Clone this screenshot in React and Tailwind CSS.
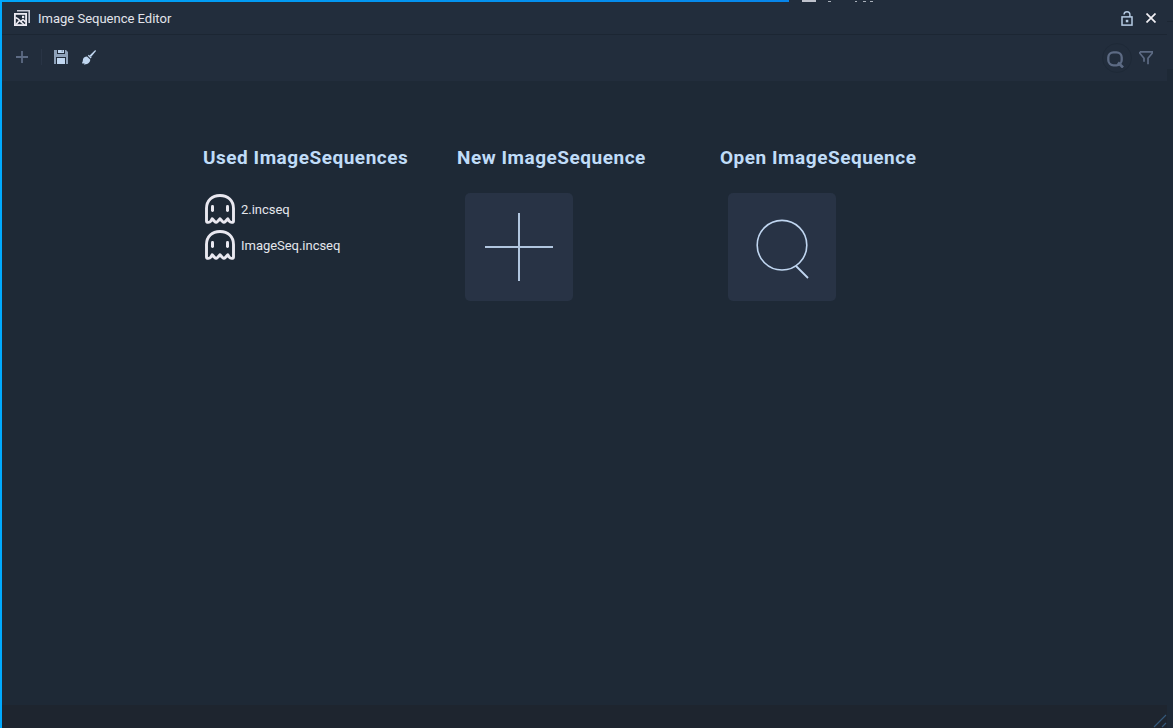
import React from 'react';

function ImagesIcon() {
  return (
    <svg width="16" height="16" viewBox="0 0 16 16" fill="none" className="block shrink-0">
      <path d="M3 .8H15.2V13" stroke="#c9ccd8" strokeWidth="1.6" />
      <rect x=".9" y="3.9" width="11.2" height="11.2" stroke="#eceaf2" strokeWidth="1.8" />
      <path d="M1.5 7.5 4 8.8 6.8 11.6 9 9.5 11.5 12M6.5 11.5 10.5 15M2 14.5 5 11" stroke="#eceaf2" strokeWidth="1.6" />
      <rect x="8" y="5.8" width="2.2" height="2.2" fill="#eceaf2" />
    </svg>
  );
}

function LockIcon() {
  return (
    <svg width="12" height="15" viewBox="0 0 12 15" fill="none" className="block">
      <rect x="1" y="5.9" width="10" height="8.2" stroke="#b6cbe3" strokeWidth="1.5" />
      <path d="M3 3.5C3.2 1.7 4.2.8 6 .8S8.9 1.8 8.9 3.6V6" stroke="#b6cbe3" strokeWidth="1.4" />
      <rect x="4.8" y="8.8" width="2.5" height="2.5" fill="#b6cbe3" />
    </svg>
  );
}

function SaveIcon() {
  return (
    <svg width="14" height="14" viewBox="0 0 14 14" className="block">
      <path d="M0 0H3V4H11V0H12L14 2V14H12V7H2V14H0Z" fill="#8ea1b9" />
      <path d="M2 4H12V7H2Z" fill="#8ea1b9" />
      <path d="M4 0H10V3H4Z" fill="#c0d6f0" />
      <path d="M7.5 0H9V2H7.5Z" fill="#8ea1b9" />
      <path d="M3 8H11V14H3Z" fill="#c0d6f0" />
    </svg>
  );
}

function BrushIcon() {
  return (
    <svg width="14" height="15" viewBox="0 0 14 15" className="block">
      <path d="M13.6.3 14 1 9 7 7.6 5.5 13 .2Z" fill="#c0d6f0" />
      <path d="M6.8 4.8 9.6 7.6 8.7 8.6 5.8 5.8Z" fill="#c0d6f0" />
      <path d="M5 6.4 8.2 9.5C8.4 12 6.4 14.6 1.8 14.4L2.6 13 .9 13.8 0 13C1.5 11 .2 9 2 7.4 3 6.6 4 6.4 5 6.4Z" fill="#c0d6f0" />
    </svg>
  );
}

function GhostIcon() {
  return (
    <svg width="30" height="30" viewBox="0 0 30 30" fill="none" className="block shrink-0">
      <path
        d="M1.5 27V14.5C1.5 6.5 7 1.5 15 1.5S28.5 6.5 28.5 14.5V27C28.3 28.8 25.5 28.8 24.2 27.2L22.8 24.7 20.3 27.5Q18.8 29.2 17.2 27.2L15 24.7 12.8 27.2Q11.2 29.2 9.7 27.5L7.2 24.7 5.8 27.2C4.5 28.8 1.7 28.8 1.5 27Z"
        stroke="#e9e8f0" strokeWidth="2.9" strokeLinejoin="round"
      />
      <rect x="6" y="11" width="3" height="7" rx="1.4" fill="#e9e8f0" />
      <rect x="21" y="11" width="3" height="7" rx="1.4" fill="#e9e8f0" />
    </svg>
  );
}

function SequenceRow({ name }) {
  return (
    <div className="flex h-9 items-center gap-1.5 pl-0.5">
      <GhostIcon />
      <span className="pt-0.5 text-[13px] leading-4 tracking-[-0.03px] text-[#e4e6ec]">{name}</span>
    </div>
  );
}

function Heading({ children }) {
  return <h2 className="h-7 whitespace-nowrap text-[19px] font-bold leading-7 tracking-[0.52px] text-[#c0dcf8]">{children}</h2>;
}

export default function App() {
  return (
    <div className="flex h-[728px] w-[1173px] flex-col overflow-hidden border-l-2 border-[#00aaff] bg-[#1e2936] font-['Roboto',sans-serif]">
      <div className="flex h-0.5 shrink-0 bg-[#222d3c]">
        <div className="w-[787px] bg-linear-to-r from-[#00a5f8] to-[#0785ea]" />
        <svg width="100" height="2" className="block">
          <path d="M13 0H27V2H13Z" fill="#bfc2cc" />
          <path d="M39 1H42V2H39ZM66 1H68V2H66ZM74 1H77V2H74ZM81 1H84V2H81Z" fill="#a9b0ba" />
        </svg>
      </div>
      <div className="flex min-h-0 flex-1">
        <div className="flex min-w-0 flex-1 flex-col">
          <header className="flex h-[33px] shrink-0 items-center border-b border-[#1c2633] bg-[#222d3c] pl-3 pr-[11px]">
            <ImagesIcon />
            <h1 className="ml-2 flex-1 pt-0.5 text-[13px] leading-4 text-[#e2e4eb]">Image Sequence Editor</h1>
            <LockIcon />
            <svg width="10" height="10" viewBox="0 0 10 10" className="ml-[13px] block">
              <path d="M.5.5 9.5 9.5M9.5.5.5 9.5" stroke="#f2f0f5" strokeWidth="1.7" />
            </svg>
          </header>
          <div className="flex h-[46px] shrink-0 items-center bg-[#222d3c] pl-3.5 pr-3.5">
            <div className="flex flex-1 items-center pb-0.5">
              <svg width="12" height="12" viewBox="0 0 12 12" className="block">
                <path d="M0 6H12M6 0V12" stroke="#5d6b84" strokeWidth="1.8" />
              </svg>
              <div className="ml-[13px] mr-3 h-4 w-px bg-[#293445]" />
              <SaveIcon />
              <div className="ml-3.5"><BrushIcon /></div>
            </div>
            <div className="mr-[7px] flex size-[30px] items-center justify-center rounded-full border border-[#1e2937] pr-1">
              <svg width="17" height="17" viewBox="0 0 17 17" fill="none" className="mt-0.5 block">
                <rect x="1.3" y="1.3" width="13.4" height="13" rx="5.2" stroke="#5d6b84" strokeWidth="2.3" />
                <path d="M11 11.5 16 16.5" stroke="#5d6b84" strokeWidth="2.6" />
              </svg>
            </div>
            <svg width="14" height="14" viewBox="0 0 14 14" fill="none" className="block">
              <path d="M.8.9H13.2V2.2L9 7.2V13.2M.8.9V2.2L5 7.2V10.8" stroke="#5d6b84" strokeWidth="1.7" />
            </svg>
          </div>
          <main className="flex flex-1 items-start pl-[201px] pt-[63px]">
            <section className="w-[254px]">
              <Heading>Used ImageSequences</Heading>
              <div className="mt-[19px]">
                <SequenceRow name="2.incseq" />
                <SequenceRow name="ImageSeq.incseq" />
              </div>
            </section>
            <section className="w-[263px]">
              <Heading>New ImageSequence</Heading>
              <button aria-label="New" className="ml-2 mt-[21px] flex size-[108px] items-center justify-center rounded-[5px] bg-[#283345]">
                <svg width="68" height="68" viewBox="0 0 68 68" className="block">
                  <path d="M0 34H68M34 0V68" stroke="#b1c6df" strokeWidth="2" />
                </svg>
              </button>
            </section>
            <section>
              <Heading>Open ImageSequence</Heading>
              <button aria-label="Open" className="ml-2 mt-[21px] block size-[108px] rounded-[5px] bg-[#283345]">
                <svg width="108" height="108" viewBox="0 0 108 108" fill="none" className="block">
                  <circle cx="54" cy="52.2" r="24.8" stroke="#c0d6f0" strokeWidth="1.6" />
                  <path d="M68 73 80 85" stroke="#c0d6f0" strokeWidth="1.8" />
                </svg>
              </button>
            </section>
          </main>
          <footer className="flex h-[23px] shrink-0 items-end justify-end bg-[#1e252f]">
            <svg width="14" height="14" viewBox="0 0 14 14" className="block">
              <path d="M1 13 13 1M9 13 13 9" stroke="#34587a" strokeWidth="1.2" />
            </svg>
          </footer>
        </div>
        <div className="flex w-1.5 shrink-0 flex-col">
          <div className="h-5 border-b border-[#1c2633] bg-[#222d3c]" />
          <div className="h-[47px] bg-[#222d3c]" />
        </div>
      </div>
    </div>
  );
}
